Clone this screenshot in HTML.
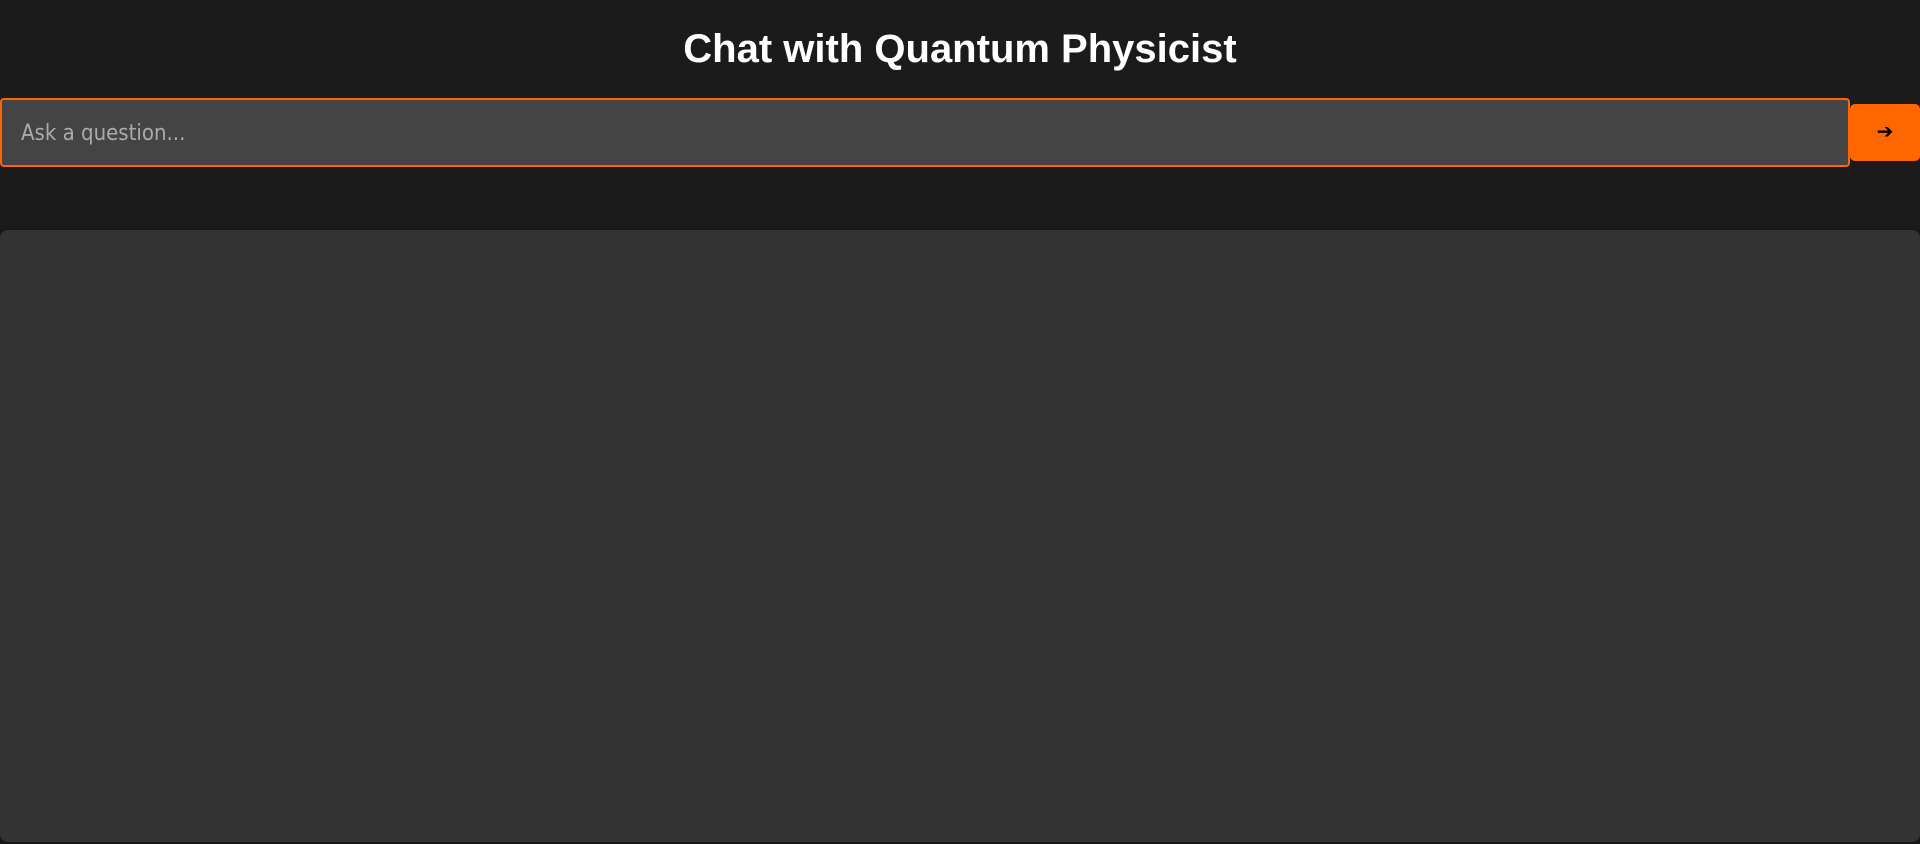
<!DOCTYPE html>
<html><head><meta charset="utf-8"><style>
html,body{margin:0;padding:0;background:#1b1b1b;width:1920px;height:844px;overflow:hidden;font-family:"Liberation Sans",sans-serif}
h1{position:absolute;left:0;width:1920px;top:25px;margin:0;text-align:center;color:#fff;font-size:40px;font-weight:bold;line-height:48px}
.inp{position:absolute;left:0;top:98px;width:1846px;height:65px;background:#444;border:2px solid #ff6600;border-radius:4px}
.inp span{position:absolute;left:19px;top:21px;font-size:22px;color:#aaa;font-family:"DejaVu Sans Condensed","DejaVu Sans",sans-serif}
.btn{position:absolute;left:1850px;top:104px;width:70px;height:57px;background:#ff6600;border-radius:5px;color:#000;font-size:20px;text-align:center;line-height:57px}
.panel{position:absolute;left:0;top:230px;width:1920px;height:612px;background:#333;border-radius:8px;box-shadow:0 0 6px rgba(0,0,0,.4)}
</style></head><body>
<h1>Chat with Quantum Physicist</h1>
<div class="inp"><span>Ask a question...</span></div>
<div class="btn">➔</div>
<div class="panel"></div>
</body></html>
